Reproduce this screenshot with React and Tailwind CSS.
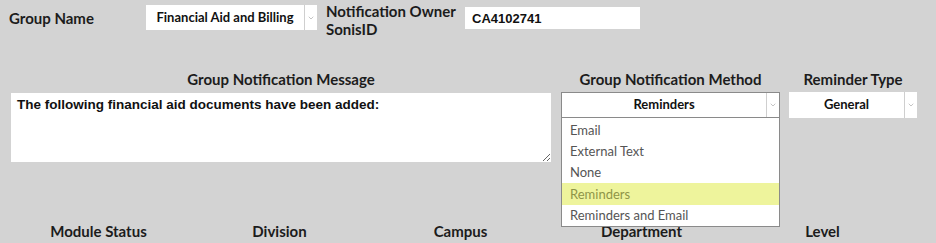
import { ChevronDown } from "lucide-react";

const label = "font-['Lato',sans-serif] font-bold text-[15px] text-[#1c1c1c]";

function Select({ value, className = "", bordered = false }) {
  return (
    <div
      className={`flex items-stretch bg-white ${bordered ? "border border-[#8a8a8a]" : ""} ${className}`}
    >
      <div className="flex flex-1 items-center justify-center font-['Lato',sans-serif] font-bold text-[13px] text-[#111]">
        {value}
      </div>
      <div className="flex w-[13px] items-center justify-center border-l border-[#cfcfcf]">
        <ChevronDown className="h-[8px] w-[8px] text-[#a8a8a8]" strokeWidth={2} />
      </div>
    </div>
  );
}

const methods = ["Email", "External Text", "None", "Reminders", "Reminders and Email"];

export default function App() {
  return (
    <div className="relative h-[243px] w-[936px] overflow-hidden bg-[#d3d3d3]">
      {/* Top row */}
      <div className="flex items-start pt-[5px]">
        <div className={`${label} ml-[9px] w-[137px] pt-[2px]`}>Group Name</div>
        <Select value="Financial Aid and Billing" className="h-[25px] w-[171px]" />
        <div className={`${label} ml-[9px] mt-[-3px] w-[139px] leading-[18px]`}>
          Notification Owner
          <br />
          SonisID
        </div>
        <input
          readOnly
          value="CA4102741"
          className="mt-[2px] h-[22px] w-[175px] bg-white px-[7px] font-['Liberation_Sans',Arial,sans-serif] text-[13px] font-bold text-[#111] outline-none"
        />
      </div>

      {/* Message / method / reminder */}
      <div className="mt-[30px] flex items-start">
        <div className="ml-[11px] w-[540px]">
          <div className={`${label} h-[25px] text-center`}>Group Notification Message</div>
          <textarea
            readOnly
            value="The following financial aid documents have been added:"
            className="block h-[69px] w-[540px] bg-white px-[6px] py-[2px] font-['Liberation_Sans',Arial,sans-serif] text-[13.5px] font-bold text-[#111] outline-none"
          />
        </div>

        <div className="relative ml-[10px] w-[219px]">
          <div className={`${label} h-[24px] text-center`}>Group Notification Method</div>
          <Select value="Reminders" bordered className="h-[26px] w-[219px]" />
          <div className="absolute left-0 top-[50px] z-10 w-[219px] border border-t-0 border-[#8a8a8a] bg-white pt-[2px] font-['Lato',sans-serif] text-[13px]">
            {methods.map((m) => (
              <div
                key={m}
                className={
                  m === "Reminders"
                    ? "h-[22px] bg-[#eef49c] pl-[8px] leading-[22px] text-[#8e9448]"
                    : "h-[21px] pl-[8px] leading-[21px] text-[#555]"
                }
              >
                {m}
              </div>
            ))}
          </div>
        </div>

        <div className="ml-[9px] w-[128px]">
          <div className={`${label} h-[24px] text-center`}>Reminder Type</div>
          <Select value="General" className="h-[26px] w-[128px]" />
        </div>
      </div>

      {/* Bottom labels */}
      <div className="mt-[58px] ml-[8px] grid w-[905px] grid-cols-5">
        {["Module Status", "Division", "Campus", "Department", "Level"].map((t) => (
          <div key={t} className={`${label} text-center`}>
            {t}
          </div>
        ))}
      </div>
    </div>
  );
}
